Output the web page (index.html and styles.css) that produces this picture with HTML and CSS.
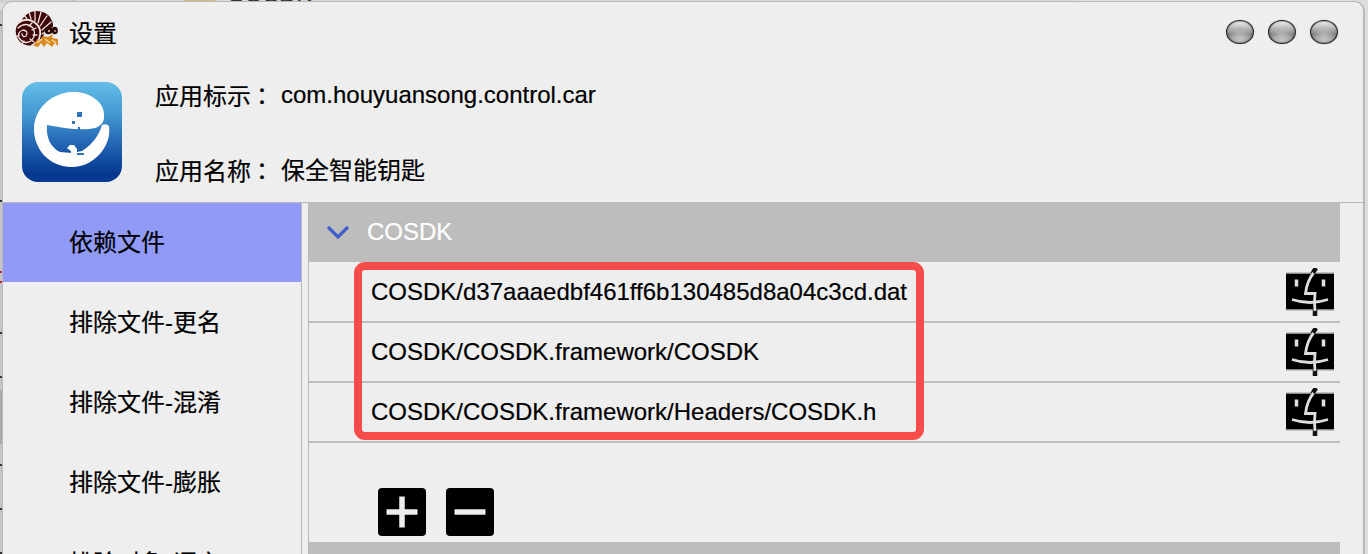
FILE: index.html
```html
<!DOCTYPE html>
<html lang="zh-CN">
<head>
<meta charset="utf-8">
<title>设置</title>
<link rel="stylesheet" href="styles.css">
</head>
<body>
<svg class="defs" width="0" height="0" aria-hidden="true">
  <symbol id="finder" viewBox="0 0 48 48">
    <path d="M0 5.500H48V41.500H0Z" fill="#000"/>
    <path d="M0 5H48M0 42H48" stroke="#999" stroke-width="1"/>
    <path d="M26.500 6Q28 2 30.500 0M29 40V48" stroke="#111" stroke-width="4.500"/>
    <path d="M27.500 5Q21 13 19.500 25.500H29Q28 34 29 43" fill="none" stroke="#dedede" stroke-width="2.800"/>
    <path d="M6 31.500Q24 37.500 42 31.500" fill="none" stroke="#dedede" stroke-width="2.800"/>
    <path d="M10.500 11.500V18.500M37.500 11.500V18.500" stroke="#dedede" stroke-width="3.500"/>
  </symbol>
</svg>
<div class="desktop">
  <div class="behind-top"><span class="behind-left"></span><span class="behind-folder"></span><span class="behind-name">COSDK</span></div>
  <div class="behind-edge"><i class="tick t1"></i><i class="tick t2"></i><i class="tick t3"></i><i class="tick t4"></i><i class="tick t5"></i><i class="tick t6"></i><i class="tick t7"></i><i class="tick t8"></i><i class="shade"></i><i class="red"></i></div>
  <div class="window">
    <header class="titlebar">
      <svg class="snail" viewBox="0 0 44 38">
        <path d="M2 27Q-2 17 6 12Q10 2 21 1Q32 1 36 9Q40 15 36 21L28 31Q20 37 11 35Q4 33 2 27Z" fill="#3b070b"/>
        <g fill="none" stroke="#f3dfdc" stroke-width="1.300" stroke-linecap="round">
          <path d="M3 13Q11 7 19 12Q28 18 24 29Q21 34 17 35" stroke-width="1.800"/>
          <path d="M3 18Q11 11 18 18Q22 25 16 31Q9 35 4 28Q2 22 8 20Q14 21 11 26Q8 28 7 24"/>
          <path d="M12 9L9 5M16 9L14 2M20 11L20 1M23 13L26 2M25 16L32 6M27 20L36 12M27 24L36 18"/>
          <path d="M14 16L17 13M17 20L21 18M18 25L22 25M15 29L19 32M9 31L7 34M4 25L1 27"/>
        </g>
        <path d="M30 20Q36 16 44 19V31H27Z" fill="#eee"/>
        <path d="M19 36L22 29L24 31L28 26L33 27L38 24L37 28L43 29L43 36L40 33L37 37L32 33L29 37L26 33L23 37Z" fill="#d88a20"/>
        <path d="M22 33L27 29M30 29L35 33M37 30L41 33" stroke="#ffe0a0" stroke-width="1.200"/>
        <ellipse cx="33.500" cy="20.500" rx="4" ry="3.800" fill="#270707"/><ellipse cx="39.800" cy="20.500" rx="3" ry="3.800" fill="#270707"/>
        <circle cx="34" cy="21" r="1.200" fill="#d49a80"/><circle cx="40" cy="21" r="1" fill="#d49a80"/>
      </svg>
      <h1 class="title">设置</h1>
      <div class="controls">
        <span class="orb"></span><span class="orb"></span><span class="orb"></span>
      </div>
    </header>
    <section class="app">
      <svg class="app-icon" viewBox="0 0 100 100">
        <defs><linearGradient id="sky" x2="0" y2="1"><stop stop-color="#64bde9"/><stop offset=".3" stop-color="#459bd3"/><stop offset=".62" stop-color="#2265b3"/><stop offset=".92" stop-color="#05378f"/><stop offset="1" stop-color="#063991"/></linearGradient></defs>
        <rect width="100" height="100" rx="16" fill="url(#sky)"/>
        <path d="M50 10C67 9 82 20 82 32C83 40 79 44 73 46C60 49 41 46 25 43C24 55 28 65 38 70L50 71L60 69C71 62 77 53 80 43Q84 41 87 44C90 64 72 85 50 85C28 85 12 68 12 47C12 27 29 11 50 10Z" fill="#fff"/>
        <path d="M45 66L48 63L52 63L55 67V72H49V69Z" fill="#fff"/>
        <path d="M55 30h5v5h-5ZM50 39h3v3h-3ZM56 45h2v3h-2ZM55 71h7v2h-7Z" fill="#2d75b8"/>
      </svg>
      <dl class="facts">
        <div class="fact"><dt>应用标示<span class="colon" lang="zh-TW">：</span></dt><dd>com.houyuansong.control.car</dd></div>
        <div class="fact"><dt>应用名称<span class="colon" lang="zh-TW">：</span></dt><dd class="name">保全智能钥匙</dd></div>
      </dl>
    </section>
    <div class="body">
      <nav class="sidebar">
        <a class="item active">依赖文件</a>
        <a class="item">排除文件-更名</a>
        <a class="item">排除文件-混淆</a>
        <a class="item">排除文件-膨胀</a>
        <a class="item last">排除对象-语言</a>
      </nav>
      <main class="content">
        <div class="group"><svg class="chevron" viewBox="0 0 24 16"><path d="M2 3L12 13L22 3" fill="none" stroke="#3e5fcb" stroke-width="3.200"/></svg><span class="group-name">COSDK</span></div>
        <div class="row"><span class="path">COSDK/d37aaaedbf461ff6b130485d8a04c3cd.dat</span><svg class="finder"><use href="#finder"/></svg></div>
        <div class="row"><span class="path">COSDK/COSDK.framework/COSDK</span><svg class="finder"><use href="#finder"/></svg></div>
        <div class="row"><span class="path">COSDK/COSDK.framework/Headers/COSDK.h</span><svg class="finder"><use href="#finder"/></svg></div>
        <div class="actions">
          <svg class="action" viewBox="0 0 48 48"><rect width="48" height="48" rx="4"/><path d="M24 8.500V39.500M8.500 24H39.500" stroke="#eee" stroke-width="5.500"/></svg>
          <svg class="action" viewBox="0 0 48 48"><rect width="48" height="48" rx="4"/><path d="M8.500 24H39.500" stroke="#eee" stroke-width="5.500"/></svg>
        </div>
        <div class="group"></div>
        <div class="highlight"></div>
      </main>
    </div>
  </div>
</div>
</body>
</html>
```
FILE: styles.css
```css
* { box-sizing: border-box; }
body { margin: 0; overflow: hidden; font: 24px/36px "Liberation Sans", "Noto Sans CJK SC", sans-serif; color: #000; -webkit-text-stroke: .2px; }
.defs { position: absolute; }
.desktop { position: relative; width: 1368px; height: 554px; padding: 1px 3px 0 2px; background: #dedede; overflow: hidden; }
.behind-top { position: absolute; left: 0; top: 0; width: 1075px; height: 3px; background: #d9d7d9; overflow: hidden; }
.behind-left { position: absolute; left: 0; top: 0; width: 74px; height: 3px; border-right: 1px solid #aaa; background: #d1cfd1; }
.behind-folder { position: absolute; left: 184px; top: 0; width: 31px; height: 2px; background: #d9bd80; }
.behind-name { position: absolute; left: 227px; top: -24px; color: #333; }
.behind-edge { position: absolute; left: 0; top: 10px; width: 3px; height: 544px; background: #c6c4c8; }
.tick { position: absolute; left: 0; width: 2px; height: 2px; background: #333; }
.t1 { top: 14px; } .t2 { top: 190px; } .t3 { top: 322px; } .t4 { top: 366px; }
.t5 { top: 410px; } .t6 { top: 454px; } .t7 { top: 498px; } .t8 { top: 542px; }
.shade { position: absolute; left: 0; top: 380px; width: 2px; height: 54px; background: #aaa8ac; }
.red { position: absolute; left: 0; top: 261px; width: 2px; height: 12px; border: solid #c22936; border-width: 2px 0; }
.window { position: relative; height: 571px; border: 1px solid #b9b9b9; border-right-width: 2px; border-radius: 10px 10px 0 0; background: #eee; overflow: hidden; }
.titlebar { display: flex; align-items: center; height: 60px; padding: 0 25px 0 12px; }
.snail { width: 44px; height: 38px; margin-top: -7px; }
.title { margin: 3px 0 0 10px; font-size: 24px; font-weight: 400; }
.controls { display: flex; gap: 14px; margin-left: auto; }
.orb { width: 28px; height: 24px; border: 1.500px solid #252525; border-radius: 50%; background: radial-gradient(ellipse at 50% 85%, #c4c4c4 0, transparent 60%), linear-gradient(#f4f4f4, #b4b4b4 35%, #858585 60%, #b8b8b8); box-shadow: 0 0 1px #777, inset 0 0 2px #444; }
.app { display: flex; gap: 33px; height: 140px; padding: 20px 0 0 19px; }
.app-icon { width: 100px; height: 100px; }
.facts { display: flex; flex-direction: column; gap: 39px; margin: -5px 0 0; }
.fact { display: flex; height: 36px; }
dt { width: 126px; white-space: nowrap; }
.colon { margin-left: -1px; font-family: "Noto Sans CJK TC", sans-serif; }
dd { margin: 0; }
.name { padding-top: 1px; }
.body { display: flex; gap: 6px; height: 370px; border-top: 1px solid #b9b9b9; }
.sidebar { width: 299px; border-right: 1px solid #b9b9b9; }
.item { display: flex; align-items: center; height: 80px; padding: 2px 0 0 66px; }
.item.active { height: 79px; padding-top: 1px; background: #919bf7; }
.item.last { padding-top: 4px; }
.content { position: relative; width: 1032px; margin-top: -1px; border-left: 1px solid #b9b9b9; }
.group { display: flex; align-items: center; height: 60px; padding-left: 17px; background: #bdbdbd; color: #fff; }
.chevron { width: 24px; height: 16px; margin-right: 17px; }
.row { display: flex; align-items: center; justify-content: space-between; height: 60px; padding: 0 6px 0 62px; background: linear-gradient(#bdbdbd, #bdbdbd) 0 59px / 100% 1px no-repeat; box-shadow: 0 1px #bdbdbd; }
.finder { width: 48px; height: 48px; }
.actions { display: flex; gap: 20px; height: 100px; padding: 46px 0 0 69px; }
.action { width: 48px; height: 48px; }
.highlight { position: absolute; left: 45px; top: 60px; width: 570px; height: 178px; border: 8px solid #f64d4b; border-radius: 11px; }
```
